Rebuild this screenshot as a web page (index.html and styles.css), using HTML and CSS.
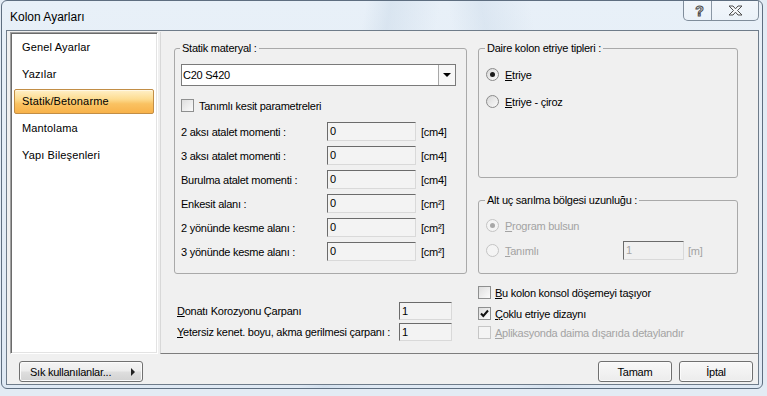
FILE: index.html
```html
<!DOCTYPE html>
<html lang="tr">
<head>
  <meta charset="UTF-8" />
  <title>Kolon Ayarları</title>
  <link rel="stylesheet" href="styles.css">
</head>
<body>
  <div class="window">
    <!-- title bar -->
    <div class="titlebar">
      <span class="title">Kolon Ayarları</span>
      <div class="caption">
        <span class="cap-help">?</span>
        <span class="cap-close">
          <svg width="15" height="11" viewBox="0 0 15 11">
            <path d="M1,1 h4 l2.5,2.8 l2.5,-2.8 h4 l-4.5,4.5 l4.5,4.5 h-4 l-2.5,-2.8 l-2.5,2.8 h-4 l4.5,-4.5 z" fill="#f7f9fb" stroke="#4d4d4d" stroke-width="1" stroke-linejoin="round"/>
          </svg>
        </span>
      </div>
    </div>

    <div class="client">
      <div class="main">
        <!-- left navigation list -->
        <ul class="nav">
          <li>Genel Ayarlar</li>
          <li>Yazılar</li>
          <li class="active">Statik/Betonarme</li>
          <li>Mantolama</li>
          <li>Yapı Bileşenleri</li>
        </ul>

        <!-- page content -->
        <div class="panel">
          <div class="col-left">
            <fieldset class="group static">
              <legend>Statik materyal :</legend>
              <div class="combo">
                <span class="combo-text">C20 S420</span>
                <span class="combo-btn"><i class="arrow"></i></span>
              </div>
              <div class="check-row first">
                <span class="box"></span>
                <span class="check-label">Tanımlı kesit parametreleri</span>
              </div>
              <div class="field-row first">
                <span class="field-label">2 aksı atalet momenti :</span>
                <span class="input">0</span>
                <span class="unit">[cm4]</span>
              </div>
              <div class="field-row">
                <span class="field-label">3 aksı atalet momenti :</span>
                <span class="input">0</span>
                <span class="unit">[cm4]</span>
              </div>
              <div class="field-row">
                <span class="field-label">Burulma atalet momenti :</span>
                <span class="input">0</span>
                <span class="unit">[cm4]</span>
              </div>
              <div class="field-row">
                <span class="field-label">Enkesit alanı :</span>
                <span class="input">0</span>
                <span class="unit">[cm²]</span>
              </div>
              <div class="field-row">
                <span class="field-label">2 yönünde kesme alanı :</span>
                <span class="input">0</span>
                <span class="unit">[cm²]</span>
              </div>
              <div class="field-row">
                <span class="field-label">3 yönünde kesme alanı :</span>
                <span class="input">0</span>
                <span class="unit">[cm²]</span>
              </div>
            </fieldset>

            <div class="factors">
              <div class="factor-row">
                <span class="factor-label"><u>D</u>onatı Korozyonu Çarpanı</span>
                <span class="input small">1</span>
              </div>
              <div class="factor-row">
                <span class="factor-label"><u>Y</u>etersiz kenet. boyu, akma gerilmesi çarpanı :</span>
                <span class="input small">1</span>
              </div>
            </div>
          </div>

          <div class="col-right">
            <fieldset class="group daire">
              <legend>Daire kolon etriye tipleri :</legend>
              <div class="radio-row">
                <span class="radio on"></span>
                <span class="radio-label"><u>E</u>triye</span>
              </div>
              <div class="radio-row second">
                <span class="radio"></span>
                <span class="radio-label"><u>E</u>triye - çiroz</span>
              </div>
            </fieldset>

            <fieldset class="group altuc">
              <legend>Alt uç sarılma bölgesi uzunluğu :</legend>
              <div class="radio-row disabled">
                <span class="radio on"></span>
                <span class="radio-label"><u>P</u>rogram bulsun</span>
              </div>
              <div class="radio-row disabled tanimli">
                <span class="radio-wrap">
                  <span class="radio"></span>
                  <span class="radio-label"><u>T</u>anımlı</span>
                </span>
                <span class="input len">1</span>
                <span class="unit">[m]</span>
              </div>
            </fieldset>

            <div class="checks">
              <div class="check-row">
                <span class="box"></span>
                <span class="check-label"><u>B</u>u kolon konsol döşemeyi taşıyor</span>
              </div>
              <div class="check-row">
                <span class="box">
                  <svg width="11" height="11" viewBox="0 0 11 11">
                    <path d="M2,5.5 L4.3,8 L9,2.5" fill="none" stroke="#111" stroke-width="2"/>
                  </svg>
                </span>
                <span class="check-label"><u>Ç</u>oklu etriye dizaynı</span>
              </div>
              <div class="check-row disabled">
                <span class="box"></span>
                <span class="check-label"><u>A</u>plikasyonda daima dışarıda detaylandır</span>
              </div>
            </div>
          </div>
        </div>
      </div>

      <!-- bottom buttons -->
      <div class="footer">
        <button class="btn fav">Sık kullanılanlar...<i class="tri"></i></button>
        <button class="btn ok">Tamam</button>
        <button class="btn cancel">İptal</button>
      </div>
    </div>
  </div>
</body>
</html>
```

FILE: styles.css
```css
/* -----------------------------------------------
   1. Reset
   ----------------------------------------------- */
* {
  margin: 0;
  padding: 0;
  box-sizing: border-box;
}

body {
  width: 767px;
  height: 396px;
  overflow: hidden;
  background: #e3ebf4;
  font-family: "Liberation Sans", Arial, sans-serif;
  font-size: 11px;
  color: #000;
}

u {
  text-decoration: underline;
  text-underline-offset: 1px;
}

/* -----------------------------------------------
   2. Window frame (glass)
   ----------------------------------------------- */
.window {
  width: 762px;
  height: 389px;
  margin-left: 1px;
  border: 1px solid #5e6e80;
  border-radius: 6px;
  padding: 0 3px 3px 4px;
  background:
    linear-gradient(100deg, rgba(255,255,255,0) 44%, rgba(190,208,226,.35) 47%, rgba(255,255,255,0) 53%),
    linear-gradient(80deg, rgba(255,255,255,0) 62%, rgba(190,208,226,.3) 66%, rgba(255,255,255,0) 72%),
    linear-gradient(#e8f0f8, #dfe9f4);
  display: flex;
  flex-direction: column;
}

.titlebar {
  height: 29px;
  display: flex;
  align-items: flex-start;
}

.title {
  font-size: 12px;
  line-height: 14px;
  padding: 9px 0 0 4px;
  color: #000;
}

.caption {
  margin-left: auto;
  width: 76px;
  height: 20px;
  display: flex;
  border: 1px solid #808d9b;
  border-top: none;
  border-radius: 0 0 5px 5px;
  background: linear-gradient(rgba(255,255,255,.45), rgba(255,255,255,.15));
}

.cap-help {
  width: 27px;
  display: flex;
  align-items: center;
  justify-content: center;
  font-size: 14px;
  font-weight: bold;
  color: #f7f9fb;
  -webkit-text-stroke: 1px #4d4d4d;
  padding-left: 4px;
}

.cap-close {
  width: 47px;
  border-left: 1px solid #8a97a5;
  display: flex;
  align-items: center;
  justify-content: center;
}

/* -----------------------------------------------
   3. Client area
   ----------------------------------------------- */
.client {
  height: 355px;
  border: 1px solid #6f7c8a;
  background: #f0f0f0;
  display: flex;
  flex-direction: column;
}

.main {
  height: 322px;
  margin-top: 1px;
  padding-left: 3px;
  display: flex;
}

/* left list */
.nav {
  list-style: none;
  width: 148px;
  height: 100%;
  background: #ffffff;
  border: 1px solid;
  border-color: #a0a0a0 #ffffff #ffffff #a0a0a0;
  box-shadow: inset 1px 1px 0 #6b6b6b, inset -1px -1px 0 #e3e3e3;
  padding: 2px 0 0 3px;
}
.nav li {
  width: 140px;
  height: 25px;
  margin-bottom: 2px;
  line-height: 23px;
  padding-left: 7px;
  border: 1px solid transparent;
  font-size: 11px;
  letter-spacing: 0.15px;
}
.nav li.active {
  border-color: #c28e46;
  border-radius: 2px;
  background: linear-gradient(#fff0c8 0%, #fddc90 40%, #fac262 60%, #f8b24a 100%);
  box-shadow: inset 0 1px 0 #fff7e2;
}

/* right panel */
.panel {
  flex: 1;
  margin-left: 2px;
  border-left: 1px solid #d8d8d8;
  border-bottom: 1px solid #7d7d7d;
  padding: 10px 0 0 13px;
  display: flex;
  gap: 11px;
  letter-spacing: -0.25px;
}

.col-left  { width: 293px; }
.col-right { width: 260px; }

/* -----------------------------------------------
   4. Group boxes
   ----------------------------------------------- */
.group {
  border: 1px solid #a9a9a9;
  border-radius: 3px;
  min-width: 0;
}
.group legend {
  font-size: 11px;
  line-height: 13px;
  padding: 0 2px;
  margin-left: -1px;
}

.static {
  height: 232px;
  padding: 9px 10px 0 6px;
}

.combo {
  width: 275px;
  height: 22px;
  display: flex;
  border: 1px solid #7a7a7a;
  background: #ffffff;
}
.combo-text {
  line-height: 20px;
  padding-left: 1px;
}
.combo-btn {
  margin-left: auto;
  width: 17px;
  height: 20px;
  border-left: 1px solid #a8a8a8;
  background: #f7f7f7;
  display: flex;
  align-items: center;
  justify-content: center;
}
.arrow {
  width: 0;
  height: 0;
  border-left: 4px solid transparent;
  border-right: 4px solid transparent;
  border-top: 4px solid #000;
}

/* checkboxes */
.check-row {
  height: 13px;
  display: flex;
  align-items: center;
}
.check-row.first { margin-top: 13px; }
.box {
  width: 13px;
  height: 13px;
  border: 1px solid #8e8f8f;
  background: linear-gradient(135deg, #dedede, #fbfbfb);
  display: flex;
  align-items: center;
  justify-content: center;
}
.check-label { margin-left: 5px; }

.check-row.disabled { color: #a3a3a3; }
.check-row.disabled .box {
  border-color: #c6c6c6;
  background: #f4f4f4;
}

/* value rows */
.field-row {
  height: 19px;
  margin-top: 5px;
  display: flex;
  align-items: center;
}
.field-row.first { margin-top: 10px; }
.field-label { width: 146px; }

.input {
  width: 89px;
  height: 19px;
  line-height: 17px;
  padding-left: 2px;
  border: 1px solid;
  border-color: #6b6b6b #d9d9d9 #d9d9d9 #6b6b6b;
  background: #f3f3f3;
}
.unit { margin-left: 5px; }

/* factors under the group */
.factors {
  margin-top: 28px;
  padding-left: 3px;
}
.factor-row {
  height: 18px;
  display: flex;
  align-items: center;
}
.factor-row + .factor-row { margin-top: 3px; }
.factor-label { width: 222px; }
.input.small {
  width: 53px;
  height: 18px;
  line-height: 16px;
}

/* -----------------------------------------------
   5. Right column
   ----------------------------------------------- */
.daire {
  height: 136px;
  padding: 13px 0 0 7px;
}

.radio-row {
  height: 13px;
  display: flex;
  align-items: center;
}
.radio-row.second { margin-top: 14px; }
.radio {
  width: 13px;
  height: 13px;
  border: 1px solid #8b8b8b;
  border-radius: 50%;
  background: linear-gradient(135deg, #d8d8d8, #fbfbfb);
  display: flex;
  align-items: center;
  justify-content: center;
}
.radio.on::after {
  content: "";
  width: 5px;
  height: 5px;
  border-radius: 50%;
  background: #1a1a1a;
}
.radio-label { margin-left: 6px; }

.radio-row.disabled { color: #a3a3a3; }
.radio-row.disabled .radio {
  border-color: #c4c4c4;
  background: #f4f4f4;
}
.radio-row.disabled .radio.on::after { background: #a8a8a8; }

.altuc {
  height: 80px;
  margin-top: 16px;
  padding: 12px 0 0 7px;
}
.radio-row.tanimli {
  height: 19px;
  margin-top: 9px;
}
.radio-wrap {
  width: 137px;
  display: flex;
  align-items: center;
}
.input.len {
  width: 61px;
  color: #a3a3a3;
  background: #f0f0f0;
}
.tanimli .unit { margin-left: 4px; }

.checks { margin-top: 12px; }
.checks .check-row + .check-row { margin-top: 8px; }
.checks .check-row.disabled { margin-top: 6px; }
.checks .check-label { margin-left: 4px; }

/* -----------------------------------------------
   6. Bottom buttons
   ----------------------------------------------- */
.footer {
  display: flex;
  padding: 7px 5px 0 12px;
}
.btn {
  height: 21px;
  border: 1px solid #707070;
  border-radius: 3px;
  background: linear-gradient(#f4f4f4 0%, #ececec 48%, #dedede 52%, #d2d2d2 100%);
  box-shadow: inset 0 0 0 1px #fbfbfb;
  font-family: "Liberation Sans", Arial, sans-serif;
  font-size: 11px;
  letter-spacing: -0.25px;
  color: #000;
}
.btn.fav {
  width: 124px;
  display: flex;
  align-items: center;
  padding: 0 7px 0 10px;
  text-align: left;
}
.tri {
  margin-left: auto;
  width: 0;
  height: 0;
  border-top: 4px solid transparent;
  border-bottom: 4px solid transparent;
  border-left: 4px solid #222;
}
.btn.ok {
  width: 74px;
  margin-left: auto;
  background: linear-gradient(#f8f8f8, #ececec);
}
.btn.cancel {
  width: 74px;
  margin-left: 7px;
  background: linear-gradient(#f8f8f8, #ececec);
}
```
